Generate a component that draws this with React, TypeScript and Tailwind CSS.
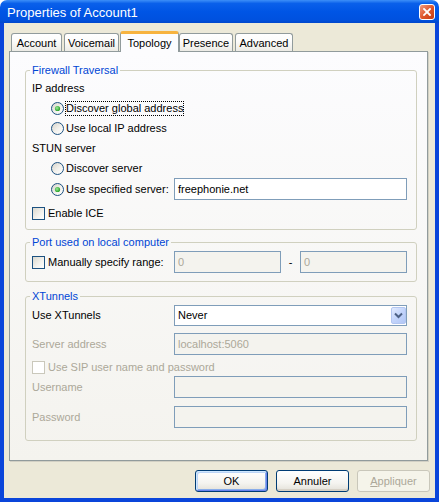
import React from 'react';

function Radio({ checked }: { checked?: boolean }) {
  return (
    <svg width="13" height="13" viewBox="0 0 13 13" className="shrink-0">
      <defs>
        <linearGradient id="rbg" x1="0" y1="0" x2="1" y2="1">
          <stop offset="0" stopColor="#d3d0c6" />
          <stop offset="0.55" stopColor="#f3f2ee" />
          <stop offset="1" stopColor="#ffffff" />
        </linearGradient>
        <radialGradient id="rdot" cx="0.4" cy="0.4" r="0.65">
          <stop offset="0" stopColor="#9be89b" />
          <stop offset="1" stopColor="#1c9c1c" />
        </radialGradient>
      </defs>
      <circle cx="6.5" cy="6.5" r="6" fill="url(#rbg)" stroke="#1c5180" />
      {checked && <circle cx="6.5" cy="6.5" r="2.6" fill="url(#rdot)" />}
    </svg>
  );
}

function Check({ disabled }: { disabled?: boolean }) {
  return (
    <svg width="13" height="13" viewBox="0 0 13 13" className="shrink-0">
      <defs>
        <linearGradient id="cbg" x1="0" y1="0" x2="1" y2="1">
          <stop offset="0" stopColor="#d8d6cc" />
          <stop offset="0.6" stopColor="#f4f3ef" />
          <stop offset="1" stopColor="#ffffff" />
        </linearGradient>
      </defs>
      <rect
        x="0.5"
        y="0.5"
        width="12"
        height="12"
        fill={disabled ? '#ffffff' : 'url(#cbg)'}
        stroke={disabled ? '#cac8bb' : '#1c5180'}
      />
    </svg>
  );
}

function Field({ value, disabled, className }: { value?: string; disabled?: boolean; className: string }) {
  return (
    <div
      className={`flex h-[22px] items-center border border-[#7f9db9] px-[3px] ${
        disabled ? 'bg-[#f4f3ee] text-[#aca899]' : 'bg-white'
      } ${className}`}
    >
      {value}
    </div>
  );
}

function RadioRow({ label, checked, focus }: { label: string; checked?: boolean; focus?: boolean }) {
  return (
    <div className="flex h-[20px] items-center pl-[19px]">
      <Radio checked={checked} />
      <span
        className={`ml-[1px] border border-dotted leading-[13px] ${focus ? 'border-black' : 'border-transparent'}`}
      >
        {label}
      </span>
    </div>
  );
}

function Tab({ label, w, ml }: { label: string; w: string; ml: string }) {
  return (
    <div
      className={`flex h-[18px] items-center justify-center rounded-t-[3px] border-x border-t border-[#919b9c] bg-[linear-gradient(180deg,#ffffff,#fcfcfb_40%,#ecebe5)] pt-[2px] ${w} ${ml}`}
    >
      {label}
    </div>
  );
}

function Button({ label, primary, disabled }: { label: React.ReactNode; primary?: boolean; disabled?: boolean }) {
  if (disabled) {
    return (
      <div className="flex h-[22px] w-[73px] items-center justify-center rounded-[3px] border border-[#c9c7ba] bg-[#f5f4ea] text-[#aca899]">
        {label}
      </div>
    );
  }
  return (
    <div
      className={`flex h-[22px] w-[73px] items-center justify-center rounded-[3px] border border-[#003c74] bg-[linear-gradient(180deg,#ffffff,#f5f4f0_60%,#e3e1d8)] ${
        primary
          ? 'shadow-[inset_1px_1px_0_0_#cee7ff,inset_-1px_-1px_0_0_#6982ee,inset_2px_2px_0_0_#bcd4f6,inset_-2px_-2px_0_0_#89adea]'
          : 'shadow-[inset_0_-2px_0_0_#d6d0c5]'
      }`}
    >
      {label}
    </div>
  );
}

export default function App() {
  return (
    <div className="flex h-[502px] w-[439px] flex-col bg-white text-[11px] leading-[13px] text-black [font-family:'Liberation_Sans',Arial,sans-serif]">
      {/* title bar */}
      <div className="flex h-[23px] items-center rounded-t-[7px] bg-[linear-gradient(180deg,#3d8ff8_0%,#0a60ea_15%,#0055e5_50%,#0051df_85%,#0047cc_100%)]">
        <span className="pl-[7px] pt-[2px] text-[13px] leading-[15px] text-white">Properties of Account1</span>
        <div className="ml-auto mr-[4px] mt-[1px] flex h-[16px] w-[16px] items-center justify-center rounded-[3px] border border-white bg-[linear-gradient(135deg,#f29a80,#dd5428_55%,#c43c16)]">
          <svg width="8" height="8" viewBox="0 0 8 8">
            <path d="M1 1 L7 7 M7 1 L1 7" stroke="#ffffff" strokeWidth="1.8" strokeLinecap="square" />
          </svg>
        </div>
      </div>

      {/* client */}
      <div className="flex flex-1 flex-col border-x-[4px] border-b-[4px] border-[#0a45da] bg-[#ece9d8]">
        <div className="ml-[7px] mt-[8px] flex h-[20px] items-end">
          <Tab label="Account" w="w-[51px]" ml="ml-0" />
          <Tab label="Voicemail" w="w-[55px]" ml="ml-[2px]" />
          <div className="relative z-10 -mb-px ml-[1px] flex h-[21px] w-[59px] items-center justify-center rounded-t-[3px] border-x border-t-[3px] border-[#919b9c] border-t-[#f7b33f] bg-[#fcfcfe]">
            Topology
          </div>
          <Tab label="Presence" w="w-[54px]" ml="ml-0" />
          <Tab label="Advanced" w="w-[58px]" ml="ml-[2px]" />
        </div>

        <div className="ml-[5px] flex h-[410px] w-[419px] flex-col border border-[#919b9c] bg-[linear-gradient(180deg,#fcfcfe,#f4f3ee)] shadow-[1px_1px_0_0_#d2d0c4]">
          {/* Firewall Traversal */}
          <fieldset className="ml-[15px] mt-[12px] w-[392px] rounded-[3px] border border-[#d0d0bf] pb-[6px] pl-[6px] pr-[9px]">
            <legend className="-ml-[2px] px-[2px] leading-[13px] text-[#0046d5]">Firewall Traversal</legend>
            <div className="mt-[1px] flex h-[20px] items-center">IP address</div>
            <RadioRow label="Discover global address" checked focus />
            <RadioRow label="Use local IP address" />
            <div className="flex h-[20px] items-center">STUN server</div>
            <RadioRow label="Discover server" />
            <div className="flex h-[22px] items-center pl-[19px]">
              <Radio checked />
              <span className="ml-[2px]">Use specified server:</span>
              <Field value="freephonie.net" className="ml-auto w-[233px]" />
            </div>
            <div className="mt-[3px] flex h-[20px] items-center">
              <Check />
              <span className="ml-[3px]">Enable ICE</span>
            </div>
          </fieldset>

          {/* Port used on local computer */}
          <fieldset className="ml-[15px] mt-[6px] w-[392px] rounded-[3px] border border-[#d0d0bf] pb-[8px] pl-[6px] pr-[9px]">
            <legend className="-ml-[2px] px-[2px] leading-[13px] text-[#0046d5]">Port used on local computer</legend>
            <div className="mt-[2px] flex h-[22px] items-center">
              <div className="flex w-[142px] items-center">
                <Check />
                <span className="ml-[3px]">Manually specify range:</span>
              </div>
              <Field value="0" disabled className="w-[107px]" />
              <div className="flex flex-1 justify-center">-</div>
              <Field value="0" disabled className="w-[107px]" />
            </div>
          </fieldset>

          {/* XTunnels */}
          <fieldset className="ml-[15px] mt-[8px] w-[392px] rounded-[3px] border border-[#d0d0bf] pb-[12px] pl-[6px] pr-[9px]">
            <legend className="-ml-[2px] px-[2px] leading-[13px] text-[#0046d5]">XTunnels</legend>
            <div className="mt-[2px] flex h-[21px] items-center">
              <div className="w-[142px]">Use XTunnels</div>
              <div className="flex h-[21px] w-[233px] items-center border border-[#7f9db9] bg-white pl-[3px]">
                <span>Never</span>
                <div className="ml-auto flex h-[17px] w-[15px] items-center justify-center rounded-[2px] border border-[#b3c6f1] bg-[linear-gradient(135deg,#e2ebfe,#c3d4fb_50%,#b2c7f5)]">
                  <svg width="9" height="7" viewBox="0 0 9 7">
                    <path d="M1 1.5 L4.5 5 L8 1.5" fill="none" stroke="#4d6185" strokeWidth="2" />
                  </svg>
                </div>
              </div>
            </div>
            <div className="mt-[7px] flex h-[22px] items-center">
              <div className="w-[142px] text-[#aca899]">Server address</div>
              <Field value="localhost:5060" disabled className="w-[233px]" />
            </div>
            <div className="mt-[5px] flex h-[14px] items-center">
              <Check disabled />
              <span className="ml-[3px] text-[#aca899]">Use SIP user name and password</span>
            </div>
            <div className="mt-[2px] flex h-[22px] items-center">
              <div className="w-[142px] text-[#aca899]">Username</div>
              <Field disabled className="w-[233px]" />
            </div>
            <div className="mt-[8px] flex h-[22px] items-center">
              <div className="w-[142px] text-[#aca899]">Password</div>
              <Field disabled className="w-[233px]" />
            </div>
          </fieldset>
        </div>

        <div className="mr-[5px] mt-[9px] flex justify-end gap-[8px]">
          <Button label="OK" primary />
          <Button label="Annuler" />
          <Button
            label={
              <span>
                <span className="underline">A</span>ppliquer
              </span>
            }
            disabled
          />
        </div>
      </div>
    </div>
  );
}
